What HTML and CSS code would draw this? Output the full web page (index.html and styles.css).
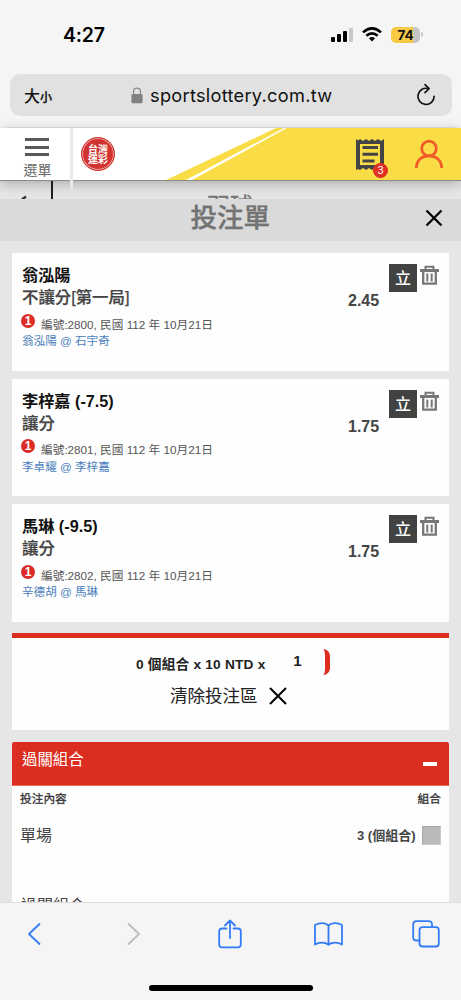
FILE: index.html
```html
<!DOCTYPE html>
<html lang="zh-Hant">
<head>
<meta charset="utf-8">
<title>投注單</title>
<link rel="stylesheet" href="styles.css">
</head>
<body>
<div class="phone">
  <div class="status">
    <span class="clock">4:27</span>
    <svg class="signal" width="24" height="16" viewBox="0 0 24 16"><rect x="1" y="10" width="4" height="5" rx="1"/><rect x="7" y="7" width="4" height="8" rx="1"/><rect x="13" y="4" width="4" height="11" rx="1"/><rect x="19" y="1" width="4" height="14" rx="1" fill="#c8c8c8"/></svg>
    <svg class="wifi" width="20" height="15" viewBox="0 0 20 15" fill="none" stroke="#000" stroke-width="2.6"><path d="M1 5.4Q10-2.6 19 5.4"/><path d="M4.3 8.8Q10 3.8 15.700 8.800"/><path d="M6.900 11.200Q10 8.700 13.100 11.200L10 14.400Z" fill="#000" stroke="none"/></svg>
    <span class="battery">74</span><i class="nub"></i>
  </div>
  <div class="address">
    <span class="size-big">大</span><span class="size-small">小</span>
    <svg class="lock" width="12" height="17" viewBox="0 0 12 17"><path d="M2.600 8V4.500a3.400 3.400 0 0 1 6.800 0V8" fill="none" stroke="#8a8a8c" stroke-width="1.300"/><rect x=".4" y="7" width="11.200" height="9.300" rx="1.500" fill="#808083"/></svg>
    <span class="domain">sportslottery.com.tw</span>
    <svg class="reload" width="20" height="24" viewBox="0 0 20 24" fill="none" stroke="#111" stroke-width="1.700" stroke-linecap="round" stroke-linejoin="round"><path d="M12.200 5.600A8.100 8.100 0 1 0 18.100 13.300"/><path d="M9 1.600L13.100 5.600L9 9.700"/></svg>
  </div>
  <header class="site">
    <svg class="stripe" width="461" height="52" viewBox="0 0 461 52" preserveAspectRatio="none"><path d="M166 52L276 0H461V52Z" fill="#f9dc46"/><path d="M186 52L284 0H287L192 52Z" fill="#fff"/></svg>
    <div class="menu"><i></i><i></i><i></i><span>選單</span></div>
    <div class="divider"></div>
    <div class="logo"><div class="logo-text"><span>台灣</span><span>運彩</span></div></div>
    <div class="slip">
      <svg width="30" height="34" viewBox="0 0 30 34"><path d="M1 1L3 2.500L5 1L8 3L11 1L14 3L17 1L20 3L23 1L26 3L29 1V32L26 30L23 32L20 30L17 32L14 30L11 32L8 30L5 32L3 31L1 32Z" fill="#444"/><path d="M5 6H25V27H5Z" fill="#f9dc46"/><path d="M7.500 8H23V11H7.500ZM7.500 14.800H23V17.800H7.500ZM7.500 21.500H19.500V24.500H7.500Z" fill="#444"/></svg>
      <b class="badge">3</b>
    </div>
    <svg class="user" width="30" height="30" viewBox="0 0 30 30" fill="none" stroke="#f15b2a" stroke-width="2.800"><circle cx="15" cy="9.500" r="7.300"/><path d="M2.300 29C2.600 20.500 8.500 16.800 15 16.800S27.400 20.500 27.700 29"/></svg>
  </header>
  <div class="behind">
    <svg class="back" width="12" height="5" viewBox="0 0 12 5"><path d="M2 4.500L6 1.500" stroke="#333" stroke-width="2.400"/></svg>
    <i class="bar"></i><span class="sport">羽球</span>
  </div>
  <div class="sheet-title">
    <h1>投注單</h1>
    <svg class="close" width="18" height="18" viewBox="0 0 18 18"><path d="M1.500 1.500L16.500 16.500M16.500 1.500L1.500 16.500" stroke="#000" stroke-width="2.300"/></svg>
  </div>
  <main>
    <section class="bet">
      <div class="info"><h2>翁泓陽</h2><h3>不讓分[第一局]</h3><p class="meta"><b>1</b>編號:2800, 民國 112 年 10月21日</p><p class="match">翁泓陽 @ 石宇奇</p></div>
      <span class="odds">2.45</span><span class="live">立</span>
      <svg class="trash" width="19" height="21" viewBox="0 0 19 21" fill="none" stroke="#777"><path d="M0 5.500H19" stroke-width="3"/><path d="M5.500 4V1.700H13.500V4" stroke-width="2"/><path d="M3.200 6V18.700H15.800V6" stroke-width="2.300"/><path d="M7.300 8.500V16.500M11.700 8.500V16.500" stroke-width="2"/></svg>
    </section>
    <section class="bet">
      <div class="info"><h2>李梓嘉 (-7.5)</h2><h3>讓分</h3><p class="meta"><b>1</b>編號:2801, 民國 112 年 10月21日</p><p class="match">李卓耀 @ 李梓嘉</p></div>
      <span class="odds">1.75</span><span class="live">立</span>
      <svg class="trash" width="19" height="21" viewBox="0 0 19 21" fill="none" stroke="#777"><path d="M0 5.500H19" stroke-width="3"/><path d="M5.500 4V1.700H13.500V4" stroke-width="2"/><path d="M3.200 6V18.700H15.800V6" stroke-width="2.300"/><path d="M7.300 8.500V16.500M11.700 8.500V16.500" stroke-width="2"/></svg>
    </section>
    <section class="bet">
      <div class="info"><h2>馬琳 (-9.5)</h2><h3>讓分</h3><p class="meta"><b>1</b>編號:2802, 民國 112 年 10月21日</p><p class="match">辛德胡 @ 馬琳</p></div>
      <span class="odds">1.75</span><span class="live">立</span>
      <svg class="trash" width="19" height="21" viewBox="0 0 19 21" fill="none" stroke="#777"><path d="M0 5.500H19" stroke-width="3"/><path d="M5.500 4V1.700H13.500V4" stroke-width="2"/><path d="M3.200 6V18.700H15.800V6" stroke-width="2.300"/><path d="M7.300 8.500V16.500M11.700 8.500V16.500" stroke-width="2"/></svg>
    </section>
    <section class="total">
      <div class="stake"><span class="formula">0 個組合 x 10 NTD x</span><span class="amount">1</span></div>
      <div class="clear"><span>清除投注區</span><svg width="18" height="18" viewBox="0 0 18 18"><path d="M1 1L17 17M17 1L1 17" stroke="#000" stroke-width="2"/></svg></div>
    </section>
    <section class="combo">
      <div class="combo-head"><span>過關組合</span><i></i></div>
      <div class="cols"><span>投注內容</span><span>組合</span></div>
      <div class="row"><span class="name">單場</span><span class="count">3 (個組合)</span><i class="check"></i></div>
      <div class="next">過關組合</div>
    </section>
  </main>
  <footer>
    <div class="tools">
      <svg width="14" height="22" viewBox="0 0 14 22" stroke="#347cf6"><path d="M12.500 1L2 11L12.500 21"/></svg>
      <svg width="14" height="22" viewBox="0 0 14 22" stroke="#bcbcbe"><path d="M1.500 1L12 11L1.500 21"/></svg>
      <svg width="24" height="30" viewBox="0 0 24 30" stroke="#347cf6"><path d="M8.500 9.500H4Q1.200 9.500 1.200 12.300V25.500Q1.200 28.300 4 28.300H20Q22.800 28.300 22.800 25.500V12.300Q22.800 9.500 20 9.500H15.500M12 19V1.500M7 6.500L12 1.500L17 6.500"/></svg>
      <svg width="29" height="24" viewBox="0 0 29 24" stroke="#347cf6"><path d="M14.500 3.500C11.500 .5 5.500 .3 1 3V22.500C5 20 11 20 14.500 22.800C18 20 24 20 28 22.500V3C23.500 .3 17.500 .5 14.500 3.500V22.800"/></svg>
      <svg width="28" height="28" viewBox="0 0 28 28" stroke="#347cf6"><path d="M7.500 20.500H4.500Q1.200 20.500 1.200 17.200V4.500Q1.200 1.200 4.500 1.200H16.500Q20 1.200 20 4.500V7"/><rect x="7.500" y="7.200" width="19.300" height="19.300" rx="3"/></svg>
    </div>
    <div class="home"></div>
  </footer>
</div>
</body>
</html>
```
FILE: styles.css
```css
* { box-sizing: border-box; }
body { margin: 0; font-family: "Liberation Sans", "Noto Sans CJK TC", sans-serif; color: #444; }
h1, h2, h3, p { margin: 0; }
svg { display: block; flex: none; }
i { display: block; flex: none; }
span { white-space: nowrap; }
.phone { width: 461px; height: 1000px; overflow: hidden; background: #e6e6e6; display: flex; flex-direction: column; }
.phone > * { flex: none; }

.status { height: 74px; background: #f5f5f5; display: flex; align-items: center; padding: 0 0 5px 63px; }
.clock { font: 600 19.500px/24px Inter, sans-serif; color: #000; width: 267px; letter-spacing: -.2px; }
.wifi { margin-left: 8px; }
.battery { width: 29px; height: 16px; margin-left: 9px; border-radius: 5px; background: linear-gradient(90deg, #f7ca45 76%, #c5c5c5 76%); color: #111; font: 700 13.500px/16px Inter, sans-serif; text-align: center; }
.nub { width: 2px; height: 5px; margin-left: 1px; border-radius: 0 2px 2px 0; background: #c5c5c5; }

.address { height: 54px; background: #f5f5f5; border: solid #f5f5f5; border-width: 0 10px 1px; border-bottom-color: #e4e4e4; display: flex; align-items: center; padding: 0 15px 11px 14px; position: relative; z-index: 0; }
.address::before { content: ""; position: absolute; z-index: -1; inset: 0 -1px 11px 0; border-radius: 10px; background: #e1e1e1; }
.size-big { font: 500 16px/24px "Noto Sans CJK TC", sans-serif; color: #111; }
.size-small { font: 500 12px/16px "Noto Sans CJK TC", sans-serif; color: #111; padding-top: 4px; width: 91px; -webkit-text-stroke: .3px #111; }
.domain { font: 400 18.200px/24px Inter, sans-serif; color: #111; margin-left: 7px; width: 266px; letter-spacing: .28px; }

.site { height: 53px; background: #fff; border-bottom: 1px solid #8b8b8b; box-shadow: 0 3px 12px rgba(0,0,0,.25); display: flex; position: relative; z-index: 2; }
.stripe { position: absolute; z-index: -1; left: 0; top: 0; }
.menu { width: 70px; padding: 10px 0 0 3px; display: flex; flex-direction: column; align-items: center; }
.menu i { width: 24px; height: 3px; margin-bottom: 4.500px; background: #595959; }
.menu span { font-size: 14px; line-height: 16px; color: #666; margin-top: 1px; padding-left: 2px; }
.divider { width: 3px; height: 61px; background: #e8e8e8; flex: none; }
.logo { width: 34px; height: 34px; margin: 9px 0 0 8px; border-radius: 50%; background: #d33330; border: 1px solid #d33330; box-shadow: inset 0 0 0 1px #eba19f; display: grid; place-items: center; }
.logo-text { display: grid; color: #fff; font: 700 10px/10px "Noto Sans CJK TC", sans-serif; }
.slip { margin: 10px 0 0 240px; width: 30px; position: relative; }
.badge { position: absolute; left: 18px; top: 25px; width: 15px; height: 15px; border-radius: 50%; background: #df3022; color: #fff; font: 400 11px/15px "Liberation Sans", sans-serif; text-align: center; }
.user { margin: 11px 0 0 29px; }

.behind { height: 18px; overflow: hidden; display: flex; align-items: flex-start; }
.back { margin: 14px 0 0 20px; }
.bar { width: 2px; height: 18px; margin-left: 19px; background: #222; }
.sport { font-size: 23px; line-height: 30px; color: #777; margin: 10px 0 0 154px; -webkit-text-stroke: .4px #777; }

.sheet-title { height: 42px; background: #dadada; display: flex; align-items: center; justify-content: flex-end; padding-right: 18px; }
.sheet-title h1 { font: 500 26.500px/32px "Noto Sans CJK TC", sans-serif; color: #737373; margin-right: 155px; padding-bottom: 8px; -webkit-text-stroke: .4px #737373; }
.close { margin-bottom: 4px; }

main { height: 661px; overflow: hidden; padding: 12px 12px 0; }
.bet { height: 117.500px; margin-bottom: 8px; background: #fefefe; display: flex; padding: 11px 10px 0 10px; }
.info { width: 326px; }
.info h2 { font-size: 16.200px; font-weight: 700; line-height: 22px; color: #111; }
.info h3 { font: 500 16.400px/22px "Liberation Sans", "Noto Sans CJK TC", sans-serif; color: #444; -webkit-text-stroke: .25px #444; }
.meta { display: flex; align-items: center; height: 18px; margin-top: 6px; font-size: 11.700px; color: #555; white-space: pre; }
.meta b { width: 14px; height: 14px; margin: -5px 6px 0 -1px; border-radius: 50%; background: #db2c27; color: #fff; font-size: 12px; line-height: 14px; text-align: center; }
.match { font-size: 11.600px; line-height: 18px; color: #4b7fbd; }
.odds { width: 41px; font-size: 16px; font-weight: 700; line-height: 22px; margin-top: 26px; }
.live { width: 28px; height: 28px; background: #424242; color: #fff; font: 500 16px/27px "Noto Sans CJK TC", sans-serif; text-align: center; }
.trash { margin-left: 3px; margin-top: 1px; }

.total { height: 97.500px; margin-top: 11px; border-top: 5px solid #dd2c20; background: #fefefe; }
.stake { display: flex; align-items: center; height: 46px; padding: 3px 0 0 124px; }
.formula { font-size: 13.700px; font-weight: 700; color: #222; width: 134px; padding-top: 2px; letter-spacing: .2px; }
.amount { width: 60px; height: 26px; border-radius: 7px; border-right: 5px solid #dd2c20; color: #222; font-size: 15px; font-weight: 700; line-height: 24px; text-align: center; }
.clear { display: flex; align-items: center; padding-left: 158px; height: 25px; font-size: 17.500px; color: #222; }
.clear span { padding-bottom: 3px; }
.clear svg { margin-left: 11px; }

.combo { margin-top: 12px; height: 180px; background: #fefefe; border-radius: 2px; overflow: hidden; }
.combo-head { height: 44px; background: #dc2e20; border-bottom: 1px solid #ec6a5f; color: #fff; display: flex; justify-content: space-between; padding: 6px 12px 0 10px; font-size: 15.400px; line-height: 24px; }
.combo-head i { width: 14px; height: 4px; background: #fff; margin-top: 14px; }
.cols { display: flex; justify-content: space-between; padding: 4px 8px 0; font-size: 11.700px; line-height: 18px; color: #333; -webkit-text-stroke: .3px #333; }
.row { display: flex; align-items: center; height: 28px; margin-top: 13px; padding: 0 8px; }
.name { font-size: 16px; width: 337px; padding-bottom: 3px; }
.count { font-size: 13px; font-weight: 700; width: 65px; padding-bottom: 2px; }
.check { width: 19px; height: 19px; background: #bababa; border: 1px solid #a9a9a9; border-right-color: #c8c8c8; border-bottom-color: #c8c8c8; }
.next { font-size: 16px; line-height: 24px; margin-top: 45px; padding-left: 9px; }

footer { height: 98px; background: #f5f5f5; border-top: 1px solid #dedede; display: flex; flex-direction: column; }
.tools { display: grid; grid-template-columns: 100px 91px 96px 98px 28px; align-items: center; height: 62px; padding-left: 27px; fill: none; stroke-width: 1.800; stroke-linecap: round; stroke-linejoin: round; }
.home { width: 164px; height: 6px; border-radius: 3px; background: #000; margin: 20px 0 0 149px; }
```
